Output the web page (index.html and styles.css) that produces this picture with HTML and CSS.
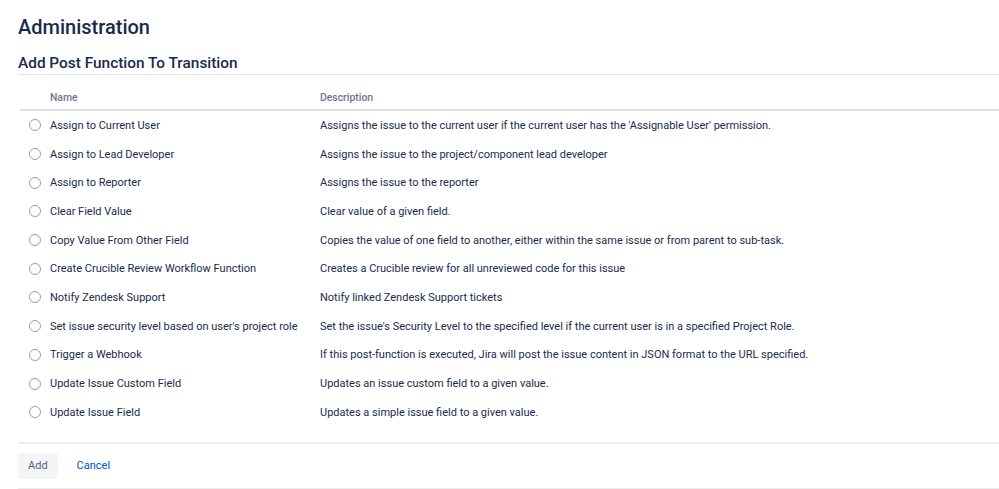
FILE: index.html
```html
<!DOCTYPE html>
<html>
<head>
<meta charset="utf-8">
<link rel="stylesheet" href="styles.css">
</head>
<body>
<div class="page">
  <h1 class="title">Administration</h1>
  <h2 class="subtitle">Add Post Function To Transition</h2>
  <table class="funcs">
    <thead>
      <tr><th class="c-radio"></th><th class="c-name">Name</th><th class="c-desc">Description</th></tr>
    </thead>
    <tbody>
      <tr><td class="c-radio"><span class="radio"></span></td><td>Assign to Current User</td><td>Assigns the issue to the current user if the current user has the 'Assignable User' permission.</td></tr>
      <tr><td class="c-radio"><span class="radio"></span></td><td>Assign to Lead Developer</td><td>Assigns the issue to the project/component lead developer</td></tr>
      <tr><td class="c-radio"><span class="radio"></span></td><td>Assign to Reporter</td><td>Assigns the issue to the reporter</td></tr>
      <tr><td class="c-radio"><span class="radio"></span></td><td>Clear Field Value</td><td>Clear value of a given field.</td></tr>
      <tr><td class="c-radio"><span class="radio"></span></td><td>Copy Value From Other Field</td><td>Copies the value of one field to another, either within the same issue or from parent to sub-task.</td></tr>
      <tr><td class="c-radio"><span class="radio"></span></td><td>Create Crucible Review Workflow Function</td><td>Creates a Crucible review for all unreviewed code for this issue</td></tr>
      <tr><td class="c-radio"><span class="radio"></span></td><td>Notify Zendesk Support</td><td>Notify linked Zendesk Support tickets</td></tr>
      <tr><td class="c-radio"><span class="radio"></span></td><td>Set issue security level based on user's project role</td><td>Set the issue's Security Level to the specified level if the current user is in a specified Project Role.</td></tr>
      <tr><td class="c-radio"><span class="radio"></span></td><td>Trigger a Webhook</td><td>If this post-function is executed, Jira will post the issue content in JSON format to the URL specified.</td></tr>
      <tr><td class="c-radio"><span class="radio"></span></td><td>Update Issue Custom Field</td><td>Updates an issue custom field to a given value.</td></tr>
      <tr><td class="c-radio"><span class="radio"></span></td><td>Update Issue Field</td><td>Updates a simple issue field to a given value.</td></tr>
    </tbody>
  </table>
  <div class="actions">
    <button class="btn-add" type="button">Add</button>
    <a class="cancel" href="#">Cancel</a>
  </div>
</div>
</body>
</html>
```

FILE: styles.css
```css
html, body {
  margin: 0;
  padding: 0;
  background: #ffffff;
}
body {
  font-family: Roboto, "Open Sans", sans-serif;
  color: #172b4d;
}
.page {
  padding: 13px 0 0 18px;
}
.title {
  margin: 0;
  font-size: 20px;
  font-weight: 500;
  line-height: 28px;
  color: #172b4d;
}
.subtitle {
  margin: 12px 0 0 0;
  font-size: 15.4px;
  font-weight: 500;
  line-height: 20px;
  padding-bottom: 1px;
  border-bottom: 1px solid #dfe1e6;
  color: #172b4d;
}
.funcs {
  margin: 14px 0 0 2px;
  width: calc(100% - 2px);
  border-collapse: collapse;
  font-size: 11px;
}
.funcs th {
  text-align: left;
  font-size: 10.4px;
  font-weight: 500;
  color: #6b778c;
  padding: 0 0 4px 0;
  height: 16px;
  border-bottom: 2px solid #dfe1e6;
}
.funcs td {
  height: 28.7px;
  padding: 0;
  vertical-align: middle;
  color: #172b4d;
}
.c-radio {
  width: 30px;
}
.c-name {
  width: 270px;
}
.radio {
  display: block;
  width: 10px;
  height: 10px;
  margin-left: 9px;
  border: 1px solid #97a0af;
  border-radius: 50%;
  background: #fff;
}
.actions {
  margin-top: 15px;
  border-top: 2px solid #ebecf0;
  border-bottom: 2px solid #ebecf0;
  padding: 9px 0 9px 0;
  display: flex;
  align-items: center;
  gap: 19px;
}
.btn-add {
  font-family: inherit;
  font-size: 11px;
  color: #505f79;
  background: #f4f5f7;
  border: none;
  border-radius: 3px;
  height: 26px;
  padding: 0 10px;
}
.cancel {
  font-size: 11px;
  color: #0052cc;
  text-decoration: none;
}
```
